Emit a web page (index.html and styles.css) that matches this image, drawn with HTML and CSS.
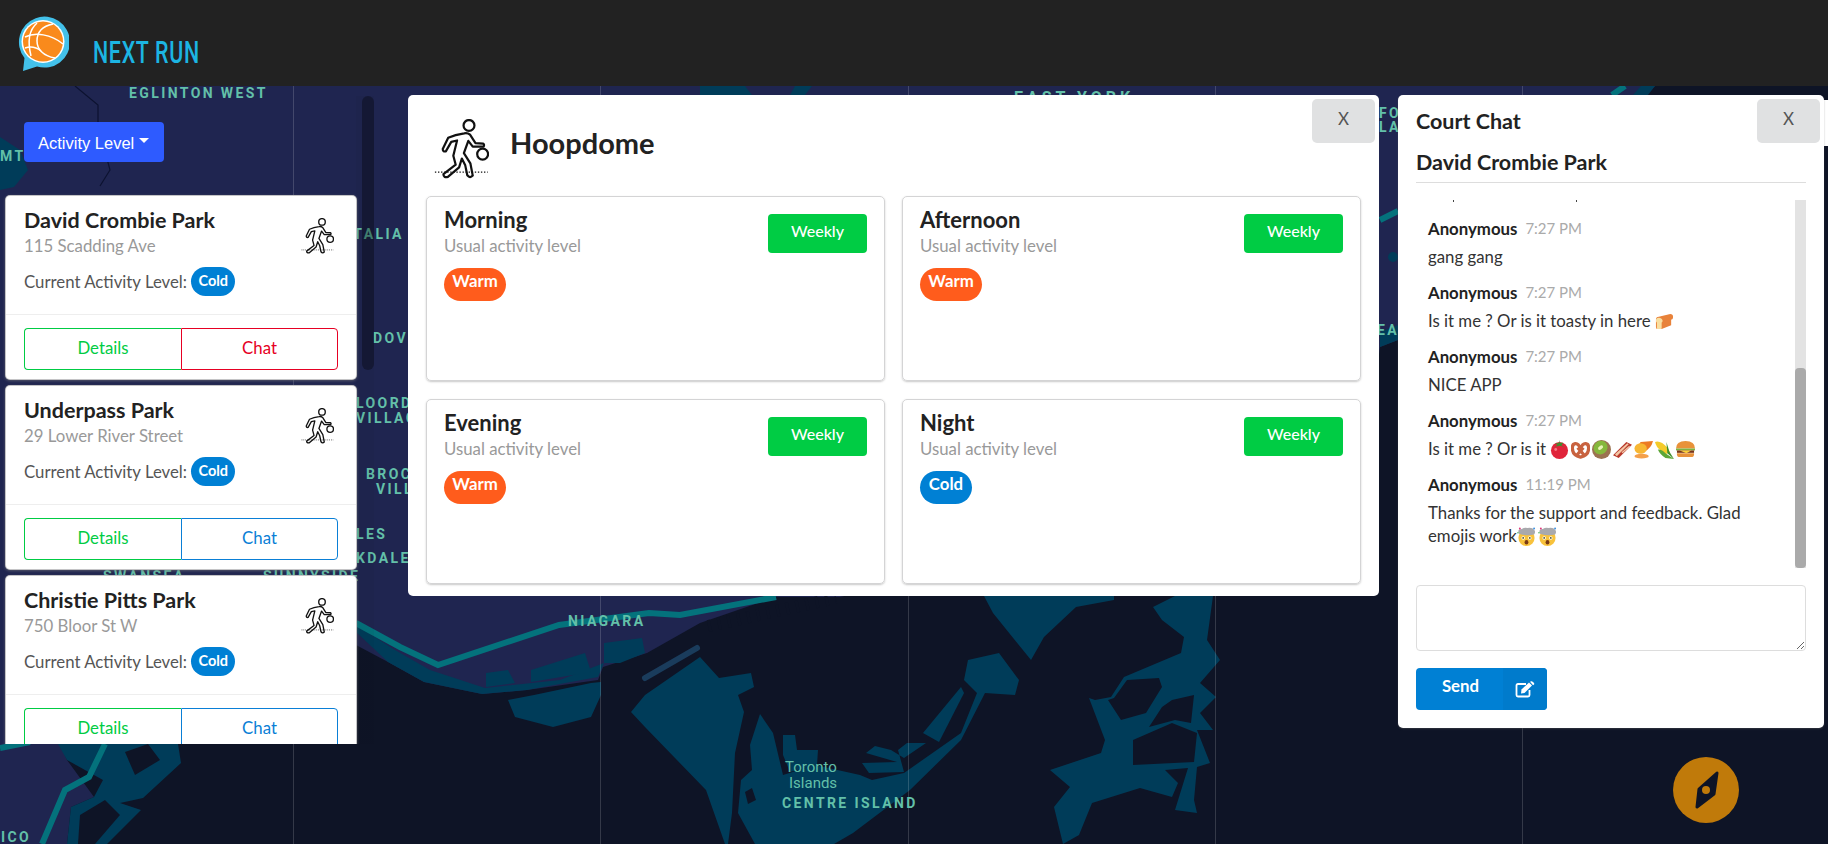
FILE: index.html
```html
<!DOCTYPE html>
<html lang="en">
<head>
<meta charset="utf-8">
<title>Next Run</title>
<link rel="stylesheet" href="styles.css">
</head>
<body>
<svg class="defs" width="0" height="0" aria-hidden="true">
  <defs>
    <symbol id="player" viewBox="45 60 160 176">
      <g fill="none" stroke="#111" stroke-width="6.5" stroke-linejoin="round" stroke-linecap="round">
        <circle cx="147" cy="79" r="16"/>
        <path d="M133 102C112 105 97 110 86 115L70 148Q70 157 79 155L95 127L112 123L101 168L108 194L72 222Q72 233 85 230L118 202L126 176L136 196L142 225Q150 235 158 226L151 190L132 160L145 124L158 141L190 141Q193 134 188 132L166 131L150 106Q143 100 133 102Z"/>
        <circle cx="187" cy="163" r="16"/>
      </g>
      <path d="M47 216H202" fill="none" stroke="#111" stroke-width="3.5" stroke-dasharray="4 5"/>
    </symbol>
    <symbol id="e-bread" viewBox="0 0 20 20">
      <path d="M1 8Q1 5 4 5L16 2Q19 2 19 5T17 8V14L7 18H3Q1 18 1 16Z" fill="#e8823a"/>
      <path d="M1 9Q1 6 4 6T8 9Q8 11 7 11V17Q7 18 6 18H3Q2 18 2 17V11Q1 11 1 9Z" fill="#f9dfa0"/>
    </symbol>
    <symbol id="e-tomato" viewBox="0 0 20 20">
      <circle cx="10" cy="11" r="9" fill="#e0243a"/>
      <path d="M10 0V3L14 3L12 5.500L15 7L10 6L5 7L8 5L5 3.500L9 3.500Z" fill="#3c8f2e"/>
      <circle cx="6" cy="10" r="1.500" fill="#f37a85"/>
    </symbol>
    <symbol id="e-pretzel" viewBox="0 0 20 20">
      <path d="M10 9C7 1 1 3 1.500 9C1.500 15 6 17 10 18C14 17 18.500 15 18.500 9C19 3 13 1 10 9ZM6 16L13 8M14 16L7 8" fill="none" stroke="#c8623f" stroke-width="3.400"/>
    </symbol>
    <symbol id="e-kiwi" viewBox="0 0 20 20">
      <circle cx="10" cy="10" r="10" fill="#9b7250"/>
      <ellipse cx="9" cy="8" rx="7.500" ry="7" transform="rotate(-35 9 8)" fill="#86b83c"/>
      <ellipse cx="9" cy="8" rx="3" ry="1.800" transform="rotate(-35 9 8)" fill="#eaf3b8"/>
    </symbol>
    <symbol id="e-bacon" viewBox="0 0 20 20">
      <path d="M0 16L14 2L20 5L6 19Z" fill="#b8392c"/>
      <path d="M2 15L15 3.500L16.500 4.500L4 17Z" fill="#f3c6a5"/>
      <path d="M9 13L17 6L18 7L10 14Z" fill="#f3c6a5"/>
    </symbol>
    <symbol id="e-potato" viewBox="0 0 20 20">
      <path d="M7 2L20 1Q18 9 11 12Q6 13 4 9Q4 5 7 2Z" fill="#ec7a23"/>
      <ellipse cx="7" cy="9" rx="6.500" ry="5.500" fill="#f7b733"/>
      <ellipse cx="8" cy="17" rx="7.500" ry="2.500" fill="#f4a04a"/>
    </symbol>
    <symbol id="e-corn" viewBox="0 0 20 20">
      <path d="M0 2Q6 0 13 8L16 13L11 15L6 11Q1 7 0 2Z" fill="#f4cb2a"/>
      <path d="M3 10Q8 10 11 14L20 20L11 19Q5 15 3 10Z" fill="#5da637"/>
      <path d="M12 2Q14 8 15 12L20 20L13 14Z" fill="#3f8f2e"/>
    </symbol>
    <symbol id="e-burger" viewBox="0 0 20 20">
      <path d="M0 9Q0 1 10 1T20 9Z" fill="#e8923a"/>
      <rect x="0" y="9" width="20" height="2" fill="#7cb342"/>
      <rect x="1" y="11" width="18" height="2.500" fill="#7a3418"/>
      <path d="M4 11H16L11 14Z" fill="#fbd13b"/>
      <path d="M1 14H19V15Q19 18 16 18H4Q1 18 1 15Z" fill="#e8923a"/>
    </symbol>
    <symbol id="e-head" viewBox="0 0 20 20">
      <circle cx="10" cy="11.500" r="8.500" fill="#f8c23c"/>
      <path d="M2 7Q0 2 5 2Q8 0 11 1Q16 0 18 3Q20 5 18 8Q10 10 2 7Z" fill="#a9a9ad"/>
      <circle cx="3" cy="1.500" r="1" fill="#e0377a"/>
      <circle cx="18" cy="1.500" r="1" fill="#3a8fe0"/>
      <circle cx="1" cy="6" r=".8" fill="#45b65a"/>
      <circle cx="6.500" cy="11.500" r="1.800" fill="#fff"/>
      <circle cx="13.500" cy="11.500" r="1.800" fill="#fff"/>
      <circle cx="6.500" cy="11.500" r=".9" fill="#442"/>
      <circle cx="13.500" cy="11.500" r=".9" fill="#442"/>
      <ellipse cx="10" cy="16" rx="2" ry="2.300" fill="#7a3a14"/>
    </symbol>
  </defs>
</svg>

<div class="app">
  <header class="topbar">
    <svg class="logo" viewBox="0 0 52 56" aria-hidden="true">
      <path d="M6 55L7.500 42A25.500 25.500 0 1 1 20 50.500Z" fill="#43c1ea"/>
      <circle cx="26" cy="25.500" r="21.500" fill="#fff"/>
      <circle cx="26" cy="25.500" r="20" fill="#f98a1c"/>
      <g fill="none" stroke="#fff" stroke-width="1.500">
        <path d="M8 21C18 16 34 18 46 28"/>
        <path d="M36 8C26 10 20 16 20 25C20 33 26 40 38 42"/>
        <path d="M20 7C12 14 10 24 14 40"/>
        <path d="M8 32C14 30 19 31 24 35"/>
      </g>
    </svg>
    <span class="brand">NEXT RUN</span>
  </header>

  <main class="stage">
    <svg class="map" viewBox="0 86 1828 758" aria-hidden="true">
      <rect x="0" y="86" width="1828" height="758" class="water"/>
      <path class="land" d="M0 86H1655L1500 250L1398 340L1380 347L1370 420L1000 560L840 597L776 597L700 623L647 653L603 667L598 680L527 690L482 694L424 682L388 662L356 645L300 680L200 720L60 744L67 760L94 797L71 807L67 844H0Z"/>
      <path class="comb" d="M708 626L836 598"/>
      <g class="park">
        <path d="M1641 86H1655L1648 95H1633Z"/>
        <path d="M700 86H745L752 95H700Z"/>
        <path d="M795 86L790 95H805L812 86Z"/>
        <path d="M0 137L20 150L28 170L14 187L0 190Z"/>
        <path d="M1380 332L1398 325V340L1380 347Z"/>
        <circle cx="1393" cy="257" r="5"/>
        <path d="M356 632L388 662L424 682L482 694L527 690L598 677L604 663L560 680L485 688L430 670L395 650L356 625Z"/>
        <path d="M604 643L642 638L645 653L620 663L604 663Z"/>
        <path d="M486 673L508 670L515 683L486 687Z"/>
        <path d="M531 670L585 653L591 672L531 682Z"/>
        <path d="M508 700L534 695L591 683L601 682L601 695L591 717L553 727L515 717Z"/>
        <path d="M700 657L719 678L751 673L754 687L738 695L744 712L735 753L732 813L728 844H725L706 790L645 727L631 712L645 695Z"/>
        <path d="M760 714L773 733L783 775L815 765L860 775L872 780L904 773L961 733L977 693L964 680L968 660L999 653L1019 680L1015 695L985 693L961 740L910 790L853 833L834 844H755L738 813L741 780L752 770L750 745Z"/>
        <path d="M961 687L923 733L939 742L964 693Z"/>
        <path d="M866 753L875 746L891 750L904 758L926 743L907 743L898 750L904 772L869 773L862 763L897 762Z"/>
        <path d="M783 735L795 735L797 750L818 750L817 765L790 772L783 755Z"/>
        <path d="M993 613L1031 660L1044 637L1076 607L1114 600L1114 596H984Z"/>
        <path d="M1089 698L1105 740L1101 753L1050 770L1070 787L1054 807L1063 844L1079 835L1092 803L1140 788L1172 797L1178 783L1165 770L1188 768L1175 810L1197 813L1194 800L1197 767L1210 763L1197 730L1213 730L1200 713L1216 697L1200 683L1220 660L1207 640L1213 596H1175L1153 607L1162 620L1184 637L1181 653L1124 677L1111 697L1095 700Z"/>
        <path d="M58 744H178L181 763L143 798L120 803L141 810L107 844H67L71 807L94 797L103 780L67 760Z"/>
      </g>
      <path class="water" d="M1133 740L1172 723L1197 733L1194 762L1133 765Z"/>
      <path class="water" d="M1114 698L1127 680L1159 678L1162 687L1146 713L1121 720L1108 700Z"/>
      <path class="water" d="M1172 700L1194 695L1191 723L1175 720L1149 727L1162 707Z"/>
      <path class="water" d="M78 844L80 815L105 800L120 815L95 844Z"/>
      <path class="water" d="M125 752L148 744L160 760L135 775Z"/>
      <path class="water" d="M745 792L752 788L756 800L748 804Z"/>
      <path class="pier" d="M645 678L697 648"/>
      <g class="road">
        <path d="M356 623L400 647L438 665L559 625L649 613L680 615L776 597"/>
        <path d="M0 748L30 742"/>
        <path d="M105 744L89 777L65 790L42 844"/>
        <path d="M1380 220L1398 211"/>
        <path d="M1625 86L1612 95"/>
      </g>
      <path class="thin" d="M75 86L98 105V125L110 170L100 186"/>
      <g class="grid">
        <path d="M293.500 86V844M600.500 86V844M908.500 86V844M1215.500 86V844M1522.500 86V844"/>
      </g>
      <g class="labels">
        <text x="129" y="98">EGLINTON WEST</text>
        <text class="wide" x="1014" y="103">EAST YORK</text>
        <text x="0" y="161">MT</text>
        <text x="347" y="239">ITALIA</text>
        <text x="373" y="343">DOV</text>
        <text x="356" y="408">LOORD</text>
        <text x="356" y="423">VILLAG</text>
        <text x="366" y="479">BROC</text>
        <text x="376" y="494">VILL</text>
        <text x="356" y="539">LES</text>
        <text x="356" y="563">KDALE</text>
        <text x="103" y="581">SWANSEA</text>
        <text x="263" y="581">SUNNYSIDE</text>
        <text x="568" y="626">NIAGARA</text>
        <text x="782" y="808">CENTRE ISLAND</text>
        <text x="1" y="842">ICO</text>
        <text x="1379" y="118">FO</text>
        <text x="1379" y="132">LA</text>
        <text x="1377" y="335">EA</text>
      </g>
      <g class="labels-sm">
        <text x="785" y="772">Toronto</text>
        <text x="789" y="788">Islands</text>
      </g>
    </svg>

    <span class="map-edge"></span>

    <aside class="sidebar">
      <button class="activity-btn" type="button">Activity Level<span class="caret"></span></button>
      <div class="court-list">
        <article class="court">
          <div class="court-main">
            <div class="court-info">
              <h3 class="court-name">David Crombie Park</h3>
              <p class="court-addr">115 Scadding Ave</p>
              <p class="court-level">Current Activity Level: <span class="pill cold">Cold</span></p>
            </div>
            <svg class="court-icon"><use href="#player"/></svg>
          </div>
          <div class="court-actions">
            <button class="split green" type="button">Details</button>
            <button class="split red" type="button">Chat</button>
          </div>
        </article>
        <article class="court">
          <div class="court-main">
            <div class="court-info">
              <h3 class="court-name">Underpass Park</h3>
              <p class="court-addr">29 Lower River Street</p>
              <p class="court-level">Current Activity Level: <span class="pill cold">Cold</span></p>
            </div>
            <svg class="court-icon"><use href="#player"/></svg>
          </div>
          <div class="court-actions">
            <button class="split green" type="button">Details</button>
            <button class="split blue" type="button">Chat</button>
          </div>
        </article>
        <article class="court">
          <div class="court-main">
            <div class="court-info">
              <h3 class="court-name">Christie Pitts Park</h3>
              <p class="court-addr">750 Bloor St W</p>
              <p class="court-level">Current Activity Level: <span class="pill cold">Cold</span></p>
            </div>
            <svg class="court-icon"><use href="#player"/></svg>
          </div>
          <div class="court-actions">
            <button class="split green" type="button">Details</button>
            <button class="split blue" type="button">Chat</button>
          </div>
        </article>
      </div>
      <span class="side-thumb"></span>
    </aside>

    <section class="modal">
      <button class="close" type="button">X</button>
      <div class="modal-head">
        <svg class="modal-icon"><use href="#player"/></svg>
        <h2 class="modal-title">Hoopdome</h2>
      </div>
      <div class="slots">
        <div class="slot">
          <div class="slot-text">
            <h3 class="slot-name">Morning</h3>
            <p class="slot-sub">Usual activity level</p>
            <span class="pill big warm">Warm</span>
          </div>
          <button class="weekly" type="button">Weekly</button>
        </div>
        <div class="slot">
          <div class="slot-text">
            <h3 class="slot-name">Afternoon</h3>
            <p class="slot-sub">Usual activity level</p>
            <span class="pill big warm">Warm</span>
          </div>
          <button class="weekly" type="button">Weekly</button>
        </div>
        <div class="slot">
          <div class="slot-text">
            <h3 class="slot-name">Evening</h3>
            <p class="slot-sub">Usual activity level</p>
            <span class="pill big warm">Warm</span>
          </div>
          <button class="weekly" type="button">Weekly</button>
        </div>
        <div class="slot">
          <div class="slot-text">
            <h3 class="slot-name">Night</h3>
            <p class="slot-sub">Usual activity level</p>
            <span class="pill big cold">Cold</span>
          </div>
          <button class="weekly" type="button">Weekly</button>
        </div>
      </div>
    </section>

    <section class="chat">
      <button class="close" type="button">X</button>
      <h3 class="chat-title">Court Chat</h3>
      <h3 class="chat-court">David Crombie Park</h3>
      <div class="chat-log">
        <div class="tail"><i></i><i></i></div>
        <div class="msg">
          <div class="msg-meta"><b>Anonymous</b><time>7:27 PM</time></div>
          <p>gang gang</p>
        </div>
        <div class="msg">
          <div class="msg-meta"><b>Anonymous</b><time>7:27 PM</time></div>
          <p>Is it me ? Or is it toasty in here <svg class="emoji"><use href="#e-bread"/></svg></p>
        </div>
        <div class="msg">
          <div class="msg-meta"><b>Anonymous</b><time>7:27 PM</time></div>
          <p>NICE APP</p>
        </div>
        <div class="msg">
          <div class="msg-meta"><b>Anonymous</b><time>7:27 PM</time></div>
          <p>Is it me ? Or is it <svg class="emoji"><use href="#e-tomato"/></svg><svg class="emoji"><use href="#e-pretzel"/></svg><svg class="emoji"><use href="#e-kiwi"/></svg><svg class="emoji"><use href="#e-bacon"/></svg><svg class="emoji"><use href="#e-potato"/></svg><svg class="emoji"><use href="#e-corn"/></svg><svg class="emoji"><use href="#e-burger"/></svg></p>
        </div>
        <div class="msg">
          <div class="msg-meta"><b>Anonymous</b><time>11:19 PM</time></div>
          <p>Thanks for the support and feedback. Glad emojis work<svg class="emoji"><use href="#e-head"/></svg><svg class="emoji"><use href="#e-head"/></svg></p>
        </div>
        <span class="log-track"><span class="log-thumb"></span></span>
      </div>
      <textarea class="chat-input" aria-label="Message"></textarea>
      <button class="send" type="button">
        <span class="send-label">Send</span>
        <span class="send-icon">
          <svg viewBox="0 0 20 17" width="20" height="17" aria-hidden="true">
            <path d="M11 3H3Q1.500 3 1.500 4.500V14Q1.500 15.500 3 15.500H13Q14.500 15.500 14.500 14V9" fill="none" stroke="#fff" stroke-width="1.800"/>
            <path d="M6.500 8.500L14 1.500L17 4.500L9.500 12L6 12.500Z" fill="#fff"/>
            <path d="M15 .8L16.200 .2Q17 0 18 1L19 2Q19.600 3 19 3.600L18 4.200Z" fill="#fff"/>
          </svg>
        </span>
      </button>
    </section>

    <button class="compass" type="button" aria-label="Locate">
      <svg viewBox="-33 -33 66 66" width="66" height="66" aria-hidden="true">
        <path d="M11 -17L-7 -1L-9 17L8 4Z" fill="#0e1426" stroke="#0e1426" stroke-width="3" stroke-linejoin="round"/>
        <circle cx="0" cy="0" r="4" fill="#c07a0a"/>
      </svg>
    </button>
  </main>
</div>
</body>
</html>
```

FILE: styles.css
```css
* { box-sizing: border-box; }

html, body {
  margin: 0;
  height: 100%;
  overflow: hidden;
}

body {
  font-family: "Lato", "Liberation Sans", sans-serif;
  font-size: 17px;
  color: #222;
  background: #0e1426;
}

button { font-family: inherit; cursor: pointer; }
h2, h3, p { margin: 0; }

.defs { position: absolute; }

.app {
  display: flex;
  flex-direction: column;
  height: 844px;
}

/* top bar */
.topbar {
  flex: 0 0 86px;
  display: flex;
  align-items: flex-start;
  background: #222;
}

.logo {
  width: 52px;
  height: 56px;
  margin: 16px 0 0 17px;
}

.brand {
  margin: 35px 0 0 24px;
  font-family: "Roboto", sans-serif;
  font-size: 31px;
  line-height: 36px;
  font-weight: 500;
  letter-spacing: 1px;
  color: #1cb5e3;
  transform: scaleX(.69);
  transform-origin: left center;
  white-space: nowrap;
}

/* map canvas */
.stage {
  position: relative;
  flex: 1;
  overflow: hidden;
}

.map {
  position: absolute;
  inset: 0;
  width: 100%;
  height: 100%;
}

.water { fill: #0e1426; }
.land { fill: #1f2550; }
.park { fill: #003c59; }
.comb { fill: none; stroke: #0e1426; stroke-width: 12; stroke-dasharray: 3 7; }
.pier { fill: none; stroke: #1a3c5c; stroke-width: 6; stroke-linecap: round; }
.road { fill: none; stroke: #04727c; stroke-width: 6; }
.thin { fill: none; stroke: #0c1230; stroke-width: 1.200; }
.grid { fill: none; stroke: rgba(255, 255, 255, .16); stroke-width: 1; }

.labels text {
  font-family: "Roboto", sans-serif;
  font-size: 14px;
  font-weight: 700;
  letter-spacing: 2.400px;
  fill: #63c0a9;
}

.labels .wide {
  font-size: 16px;
  letter-spacing: 4px;
}

.labels-sm text {
  font-family: "Roboto", sans-serif;
  font-size: 15px;
  fill: #63c0a9;
}

.map-edge {
  position: absolute;
  top: 14px;
  right: 0;
  width: 4px;
  height: 46px;
  background: #fff;
}

/* sidebar */
.sidebar {
  position: absolute;
  left: 0;
  top: 10px;
  width: 374px;
  height: 648px;
  padding-top: 26px;
  overflow: hidden;
  background: linear-gradient(to right, transparent 356px, rgba(0, 0, 0, .04) 356px);
}

.activity-btn {
  display: flex;
  align-items: center;
  width: 140px;
  height: 40px;
  margin-left: 24px;
  padding: 2px 0 0 14px;
  border: 0;
  border-radius: 4px;
  background: #2e5bff;
  color: #fff;
  font-family: "Liberation Sans", sans-serif;
  font-size: 16.500px;
  white-space: nowrap;
}

.caret {
  flex: none;
  width: 0;
  height: 0;
  margin: -5px 0 0 5px;
  border-top: 5px solid #fff;
  border-left: 5px solid transparent;
  border-right: 5px solid transparent;
}

.court-list {
  display: flex;
  flex-direction: column;
  gap: 7px;
  width: 350px;
  margin: 34px 0 0 6px;
}

.court {
  flex: 0 0 183px;
  height: 183px;
  background: #fff;
  border-radius: 4px;
  box-shadow: 0 0 0 1px #c4c4c6, 0 1px 3px 1px rgba(120, 120, 120, .6);
}

.court-main {
  display: flex;
  justify-content: space-between;
  height: 119px;
  padding: 10px 22px 0 19px;
  border-bottom: 1px solid #eee;
}

.court-name {
  margin-left: -1px;
  font-size: 21.500px;
  line-height: 28px;
  font-weight: 700;
  color: #222;
}

.court-addr {
  margin-left: -1px;
  font-size: 16.800px;
  line-height: 24px;
  color: #999;
}

.court-level {
  display: flex;
  align-items: center;
  margin: 9px 0 0 -1px;
  font-size: 16.800px;
  color: #555;
  white-space: pre;
}

.court-icon {
  width: 33px;
  height: 36px;
  margin-top: 12px;
}

.pill {
  display: inline-flex;
  align-items: center;
  justify-content: center;
  width: 44px;
  height: 29px;
  padding-bottom: 2px;
  border-radius: 15px;
  color: #fff;
  font-size: 14.500px;
  font-weight: 700;
}

.pill.big {
  height: 33px;
  border-radius: 17px;
  font-size: 16.800px;
  padding-bottom: 9px;
}

.pill.big.warm { width: 62px; }
.pill.big.cold { width: 52px; }

.cold { background: #0080d4; }
.warm { background: #ff5c1c; }

.court-actions {
  display: flex;
  padding: 13px 18px 0;
}

.split {
  flex: 0 0 157px;
  height: 42px;
  padding: 0 0 4px;
  background: #fff;
  font-size: 16.800px;
  border: 1px solid;
}

.split.green {
  color: #00cc44;
  border-color: #00cc44;
  border-right: 0;
  border-radius: 4px 0 0 4px;
}

.split.red {
  color: #e60023;
  border-color: #e60023;
  border-radius: 0 4px 4px 0;
}

.split.blue {
  color: #0a7fd6;
  border-color: #0a7fd6;
  border-radius: 0 4px 4px 0;
}

.side-thumb {
  position: absolute;
  top: 0;
  right: 0;
  width: 12px;
  height: 274px;
  border-radius: 6px;
  background: rgba(0, 0, 0, .32);
}

/* court modal */
.modal {
  position: absolute;
  left: 408px;
  top: 9px;
  width: 971px;
  height: 501px;
  padding: 0 17px 0 18px;
  background: #fff;
  border-radius: 5px;
}

.close {
  position: absolute;
  top: 4px;
  right: 4px;
  width: 63px;
  height: 44px;
  padding: 0 0 6px;
  border: 0;
  border-radius: 5px;
  background: #e0e1e2;
  color: #555;
  font-size: 17px;
}

.modal-head {
  display: flex;
  align-items: center;
  height: 101px;
  padding: 6px 0 0 8px;
}

.modal-icon {
  width: 55px;
  height: 60px;
}

.modal-title {
  margin: -12px 0 0 21px;
  font-size: 29px;
  line-height: 40px;
  font-weight: 700;
  color: #222;
}

.slots {
  display: grid;
  grid-template-columns: 459px 459px;
  grid-auto-rows: 185px;
  column-gap: 17px;
  row-gap: 18px;
}

.slot {
  display: flex;
  justify-content: space-between;
  align-items: flex-start;
  padding: 9px 17px 0;
  border: 1px solid #d4d4d5;
  border-radius: 5px;
  box-shadow: 0 1px 2px rgba(100, 100, 100, .35);
}

.slot-name {
  font-size: 22px;
  line-height: 28px;
  font-weight: 700;
  color: #222;
}

.slot-sub {
  font-size: 16.800px;
  line-height: 24px;
  color: #999;
}

.slot-text .pill { margin-top: 10px; }

.weekly {
  width: 99px;
  height: 39px;
  margin-top: 8px;
  padding: 0 0 6px;
  border: 0;
  border-radius: 4px;
  background: #00cc44;
  color: #fff;
  font-size: 16px;
  font-weight: 500;
}

/* chat panel */
.chat {
  position: absolute;
  left: 1398px;
  top: 9px;
  width: 426px;
  height: 633px;
  padding: 12px 18px 0;
  background: #fff;
  border-radius: 5px;
  box-shadow: 0 1px 2px rgba(100, 100, 100, .4);
}

.chat-title,
.chat-court {
  font-size: 21.500px;
  line-height: 28px;
  font-weight: 700;
  color: #222;
}

.chat-court {
  height: 35px;
  margin-top: 13px;
  border-bottom: 1px solid #ddd;
}

.chat-log {
  position: relative;
  height: 368px;
  margin-top: 17px;
  padding: 0 20px 0 12px;
  overflow: hidden;
}

.tail {
  display: flex;
  gap: 122px;
  height: 17px;
  padding-left: 25px;
}

.tail i {
  width: 1px;
  height: 2px;
  background: #444;
}

.msg { margin-bottom: 13px; }

.msg-meta {
  display: flex;
  align-items: center;
  gap: 8px;
  height: 22px;
  margin-bottom: 6px;
}

.msg-meta b { font-size: 16.800px; font-weight: 700; color: #222; }
.msg-meta time { font-size: 15px; color: #aaa; }

.msg p {
  font-size: 16.800px;
  line-height: 23px;
  color: #333;
}

.emoji {
  width: 19px;
  height: 19px;
  margin-right: 2px;
  vertical-align: -4px;
}

.log-track {
  position: absolute;
  top: 0;
  right: 0;
  width: 11px;
  height: 100%;
  background: #e3e3e3;
}

.log-thumb {
  position: absolute;
  left: 0;
  bottom: 0;
  width: 100%;
  height: 200px;
  border-radius: 4px;
  background: #aaa;
}

.chat-input {
  display: block;
  width: 390px;
  height: 66px;
  margin-top: 17px;
  border: 1px solid #ddd;
  border-radius: 4px;
  background: #fff;
}

.send {
  display: flex;
  width: 131px;
  height: 42px;
  margin-top: 17px;
  padding: 0;
  border: 0;
  border-radius: 4px;
  overflow: hidden;
  background: #0080d4;
  color: #fff;
  font-size: 16.800px;
  font-weight: 700;
}

.send-label {
  flex: 0 0 87px;
  padding: 8px 0 0 2px;
  line-height: 20px;
}

.send-icon {
  flex: 1;
  display: flex;
  align-items: center;
  justify-content: center;
  background: #007bcc;
}

/* locate button */
.compass {
  position: absolute;
  left: 1673px;
  top: 671px;
  width: 66px;
  height: 66px;
  padding: 0;
  border: 0;
  border-radius: 50%;
  background: #c07a0a;
}
```
